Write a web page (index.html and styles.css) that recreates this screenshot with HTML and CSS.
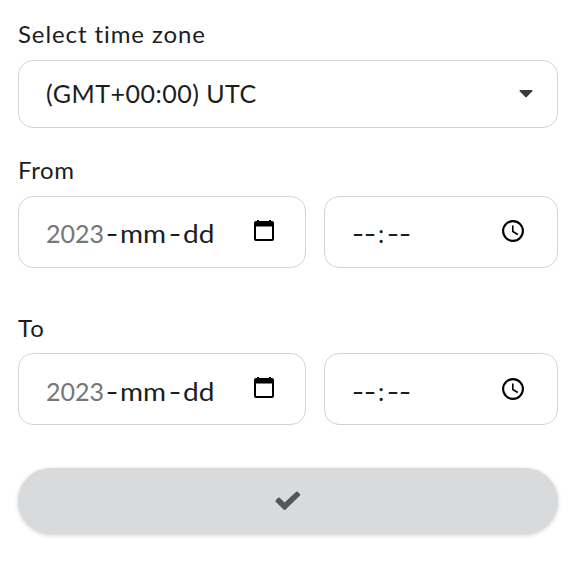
FILE: index.html
```html
<!DOCTYPE html>
<html lang="en">
<head>
<meta charset="utf-8">
<title>Time range</title>
<link rel="stylesheet" href="styles.css">
</head>
<body>
<form class="range">
  <section class="group zone">
    <div class="label"><span class="label-zone">Select time zone</span></div>
    <div class="field select">
      <span class="select-value">(GMT+00:00) UTC</span>
      <svg class="caret" width="14" height="8" viewBox="0 0 14 8"><path d="M1.2 0h11.6q1.2.3.5 1.3L8 6.8q-1 1-2 0L.7 1.3Q0 .3 1.2 0z" fill="#3b3b3c"/></svg>
    </div>
  </section>
  <section class="group from">
    <div class="label"><span class="label-from">From</span></div>
    <div class="row">
      <div class="field date">
        <span class="year">2023</span><span class="dash">-</span><span class="month">mm</span><span class="dash">-</span><span class="day">dd</span>
        <svg class="calendar" width="20" height="22" viewBox="0 0 20 22"><path fill-rule="evenodd" d="M3 0h2v1h10V0h2v1h1q2 0 2 2v16q0 2-2 2H2q-2 0-2-2V3q0-2 2-2h1zM2 6.5V19h16V6.5z"/></svg>
      </div>
      <div class="field time">
        <span class="digit">-</span><span class="digit">-</span><span class="colon">:</span><span class="digit">-</span><span class="digit">-</span>
        <svg class="clock" width="22" height="22" viewBox="0 0 22 22"><circle cx="11" cy="11" r="9.9"/><path d="M10.8 5.5v6l5 3" stroke-width="1.6"/></svg>
      </div>
    </div>
  </section>
  <section class="group to">
    <div class="label"><span class="label-to">To</span></div>
    <div class="row">
      <div class="field date">
        <span class="year">2023</span><span class="dash">-</span><span class="month">mm</span><span class="dash">-</span><span class="day">dd</span>
        <svg class="calendar" width="20" height="22" viewBox="0 0 20 22"><path fill-rule="evenodd" d="M3 0h2v1h10V0h2v1h1q2 0 2 2v16q0 2-2 2H2q-2 0-2-2V3q0-2 2-2h1zM2 6.5V19h16V6.5z"/></svg>
      </div>
      <div class="field time">
        <span class="digit">-</span><span class="digit">-</span><span class="colon">:</span><span class="digit">-</span><span class="digit">-</span>
        <svg class="clock" width="22" height="22" viewBox="0 0 22 22"><circle cx="11" cy="11" r="9.9"/><path d="M10.8 5.5v6l5 3" stroke-width="1.6"/></svg>
      </div>
    </div>
  </section>
  <button class="submit" type="button" aria-label="Apply">
    <svg width="26" height="20" viewBox="0 0 26 20"><path d="M3.1 9.3 9.6 15.5 22.8 3" fill="none" stroke="#555657" stroke-width="4"/><path d="M.7 9.3 3.2 6.7q.8-.5 1.5 0l4.9 4.8L21.2.7q.8-.5 1.5 0l2.3 2.3q.5.8 0 1.5L10.4 18.8q-.8.6-1.6 0L.7 10.8q-.5-.8 0-1.5z" fill="#555657"/></svg>
  </button>
</form>
</body>
</html>
```
FILE: styles.css
```css
* { box-sizing: border-box; }
body {
  margin: 0;
  background: #fff;
  color: #1d1d1e;
  font-family: Lato, "Liberation Sans", sans-serif;
  font-size: 24px;
}
.range {
  display: flex;
  flex-direction: column;
  width: 572px;
  min-height: 576px;
  padding: 20px 14px 0 18px;
}
.group { display: flex; flex-direction: column; gap: 12px; }
.from { margin-top: 28px; }
.to { margin-top: 46px; gap: 11px; }
.label { height: 28px; line-height: 28px; white-space: nowrap; }
.label-zone { letter-spacing: 0.9px; }
.label-from { letter-spacing: 0.6px; }
.label-to { letter-spacing: 1px; }
.field {
  display: flex;
  align-items: center;
  border: 1px solid #d4d4d4;
  border-radius: 15px;
  white-space: nowrap;
}
.select {
  height: 68px;
  padding: 0 24px 0 27px;
  justify-content: space-between;
  font-size: 25px;
}
.select-value { letter-spacing: 0.5px; line-height: 30px; margin-bottom: 3px; }
.row { display: flex; gap: 18px; }
.date, .time { height: 72px; font-size: 25px; padding: 2px 31px 0 27px; line-height: 30px; }
.to .field { padding-top: 3px; }
.date { width: 288px; }
.time { width: 234px; padding-right: 33px; }
.year { width: 58px; color: #777; }
.dash { width: 16px; text-align: center; transform: scaleX(1.4); }
.month { width: 47px; transform: scaleX(1.12); transform-origin: left; }
.day { width: 33px; transform: scaleX(1.12); transform-origin: left; }
.digit { width: 12.3px; text-align: center; transform: scaleX(1.35); }
.digit:nth-last-of-type(-n+2) { left: 1px; position: relative; }
.colon { width: 9px; text-align: center; }
.calendar, .clock { margin: 0 0 4px auto; }
.to .calendar { margin-bottom: 5px; }
.to .clock { margin-bottom: 3px; }
.clock { fill: none; stroke: #000; stroke-width: 2.1; }
.submit {
  display: flex;
  align-items: center;
  justify-content: center;
  height: 66px;
  margin-top: 43px;
  padding: 0;
  border: 0;
  border-radius: 33px;
  background: #d9dadc;
  box-shadow: 0 1px 4px rgba(0, 0, 0, 0.2);
}
```
